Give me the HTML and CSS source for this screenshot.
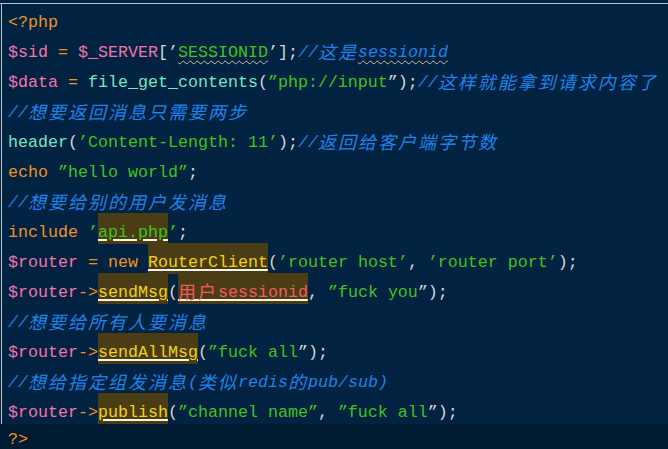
FILE: index.html
```html
<!DOCTYPE html>
<html>
<head>
<meta charset="utf-8">
<link rel="stylesheet" href="styles.css">
</head>
<body>
<div class="editor">
  <div class="code">
    <div class="ln"><span class="kw">&lt;?php</span></div>
    <div class="ln"><span class="v">$sid</span> <span class="kw">=</span> <span class="v">$_SERVER</span><span class="p">[’</span><span class="s wavy">SESSIONID</span><span class="p">’];</span><span class="c">//<span class="z">这是</span><span class="wavy">sessionid</span></span></div>
    <div class="ln"><span class="v">$data</span> <span class="kw">=</span> <span class="f">file_get_contents</span><span class="p">(</span><span class="s">”php://input</span><span class="p">”);</span><span class="c">//<span class="z">这样就能拿到请求内容了</span></span></div>
    <div class="ln"><span class="c">//<span class="z">想要返回消息只需要两步</span></span></div>
    <div class="ln"><span class="f">header</span><span class="p">(</span><span class="s">’Content-Length: 11’</span><span class="p">);</span><span class="c">//<span class="z">返回给客户端字节数</span></span></div>
    <div class="ln"><span class="kw">echo</span> <span class="s">”hello world”</span><span class="p">;</span></div>
    <div class="ln"><span class="c">//<span class="z">想要给别的用户发消息</span></span></div>
    <div class="ln"><span class="kw">include</span> <span class="s">’</span><span class="hl s">api.php</span><span class="s">’</span><span class="p">;</span></div>
    <div class="ln"><span class="v">$router</span> <span class="kw">=</span> <span class="kw">new</span> <span class="hl y">RouterClient</span><span class="p">(</span><span class="s">’router host’</span><span class="p">,</span> <span class="s">’router port’</span><span class="p">);</span></div>
    <div class="ln"><span class="v">$router</span><span class="kw">-&gt;</span><span class="hl y">sendMsg</span><span class="p">(</span><span class="hl r"><span class="z">用户</span>sessionid</span><span class="p">,</span> <span class="s">”fuck you</span><span class="p">”);</span></div>
    <div class="ln"><span class="c">//<span class="z">想要给所有人要消息</span></span></div>
    <div class="ln"><span class="v">$router</span><span class="kw">-&gt;</span><span class="hl y">sendAllMsg</span><span class="p">(</span><span class="s">”fuck all</span><span class="p">”);</span></div>
    <div class="ln"><span class="c">//<span class="z">想给指定组发消息</span>(<span class="z">类似</span>redis<span class="z">的</span>pub/sub)</span></div>
    <div class="ln"><span class="v">$router</span><span class="kw">-&gt;</span><span class="hl y">publish</span><span class="p">(</span><span class="s">”channel name”</span><span class="p">,</span> <span class="s">”fuck all</span><span class="p">”);</span></div>
  </div>
  <div class="ln cur"><span class="kw">?&gt;</span></div>
</div>
</body>
</html>
```

FILE: styles.css
```css
html, body {
  margin: 0;
  padding: 0;
  background: #012240;
  height: 100%;
  overflow: hidden;
}

.editor {
  margin-top: 3px;
  border-top: 1px solid #b9c3cd;
  font-family: "Liberation Mono", "Noto Sans CJK SC", monospace;
  font-size: 16.667px;
  color: #d4d4d4;
}

.code {
  margin-left: 1px;
  border-left: 1px solid #b9c3cd;
  padding-left: 6px;
}

.ln {
  height: 30px;
  box-sizing: border-box;
  padding-top: 8px;
  line-height: 22px;
  white-space: pre;
}

.cur {
  background: #001a31;
  padding-left: 8px;
  padding-top: 7px;
  line-height: 18px;
  height: 25px;
}

.kw { color: #ee9226; }
.v { color: #f274aa; }
.f { color: #76e6c4; }
.s { color: #3fc41f; }
.p { color: #d6d6d6; }
.y { color: #f2d21a; }
.r { color: #f25c5c; }

.c {
  color: #1f82ea;
  font-style: italic;
}

.z {
  font-family: "Noto Sans CJK SC", sans-serif;
  font-size: 18px;
  letter-spacing: 2px;
  line-height: 1;
  vertical-align: -2px;
}

.wavy {
  text-decoration: underline wavy #c9c2a6;
  text-decoration-thickness: 1px;
  text-underline-offset: 3px;
}

.hl {
  background: #4a3c14;
  padding-top: 9.6px;
  padding-bottom: 1.6px;
  text-decoration: underline #f4f4ea;
  text-decoration-thickness: 2px;
  text-underline-offset: 2px;
}
```
